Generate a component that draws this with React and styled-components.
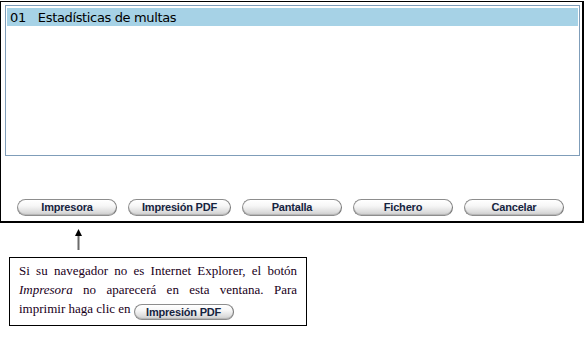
import React from 'react';
import styled, { createGlobalStyle } from 'styled-components';

const GlobalStyle = createGlobalStyle`
	html, body {
		margin: 0;
		padding: 0;
		background: #fff;
	}
	body {
		font-family: 'Liberation Sans', Arial, sans-serif;
	}
`;

const Page = styled.div`
	padding-top: 1px;
	width: 586px;
`;

const Frame = styled.div`
	width: 575px;
	border: 1px solid #000;
	border-right-width: 2px;
	border-bottom-width: 2px;
	padding: 3px 2px 5px 4px;
	box-sizing: content-box;
`;

const ListBox = styled.div`
	height: 145px;
	border: 1px solid #7f9db9;
	padding: 2px 1px;
	background: #fff;
`;

const ListRow = styled.div`
	display: flex;
	gap: 12px;
	height: 18px;
	align-items: center;
	padding-left: 3px;
	background: ${({ $selected }) => ($selected ? '#a6d2e6' : 'transparent')};
	font-family: 'DejaVu Sans', Verdana, sans-serif;
	font-size: 13px;
	letter-spacing: -0.35px;
	color: #000;
`;

const ButtonRow = styled.div`
	display: flex;
	gap: 11px;
	margin-top: 43px;
	padding-left: 12px;
`;

const PillButton = styled.button`
	width: ${({ $wide }) => ($wide ? 103 : 100)}px;
	height: 17px;
	padding: 0;
	border: 1px solid #8d8d8d;
	border-right-color: #777;
	border-radius: 9px;
	background: linear-gradient(to bottom, #ffffff 0%, #f6f6f6 40%, #dedede 78%, #cbcbcb 100%);
	box-shadow: inset 0 -1px 0 #b8b8b8, inset 0 1px 0 #fff;
	font-family: 'Liberation Sans', Arial, sans-serif;
	font-weight: bold;
	font-size: 11px;
	letter-spacing: -0.2px;
	color: #16243f;
	line-height: 15px;
	cursor: pointer;
	display: inline-flex;
	align-items: center;
	justify-content: center;
`;

const InlinePill = styled(PillButton)`
	height: 16px;
	line-height: 14px;
	vertical-align: -3px;
	margin-left: 3px;
`;

const ArrowWrap = styled.div`
	padding: 6px 0 0 74px;
	height: 28px;
`;

const Note = styled.div`
	width: 278px;
	margin-left: 9px;
	border: 1px solid #000;
	padding: 3px 9px 5px 9px;
	font-family: 'Liberation Serif', 'Times New Roman', serif;
	font-size: 13px;
	line-height: 19px;
	text-align: justify;
	color: #1a001a;

	em {
		font-style: italic;
	}
`;

const UpArrow = () => (
	<svg width="9" height="21" viewBox="0 0 9 21">
		<rect x="3.5" y="5" width="2" height="16" fill="#6b6b6b" />
		<polygon points="4.5,0 8,7 1,7" fill="#000" />
	</svg>
);

const buttons = [
	{ label: 'Impresora' },
	{ label: 'Impresión PDF', wide: true },
	{ label: 'Pantalla' },
	{ label: 'Fichero' },
	{ label: 'Cancelar' },
];

const App = () => {
	return (
		<>
			<GlobalStyle />
			<Page>
				<Frame>
					<ListBox>
						<ListRow $selected>
							<span>01</span>
							<span>Estadísticas de multas</span>
						</ListRow>
					</ListBox>
					<ButtonRow>
						{buttons.map((b) => (
							<PillButton key={b.label} $wide={b.wide}>
								{b.label}
							</PillButton>
						))}
					</ButtonRow>
				</Frame>
				<ArrowWrap>
					<UpArrow />
				</ArrowWrap>
				<Note>
					Si su navegador no es Internet Explorer, el botón <em>Impresora</em> no
					aparecerá en esta ventana. Para imprimir haga clic en
					<InlinePill>Impresión PDF</InlinePill>
				</Note>
			</Page>
		</>
	);
};

export default App;
